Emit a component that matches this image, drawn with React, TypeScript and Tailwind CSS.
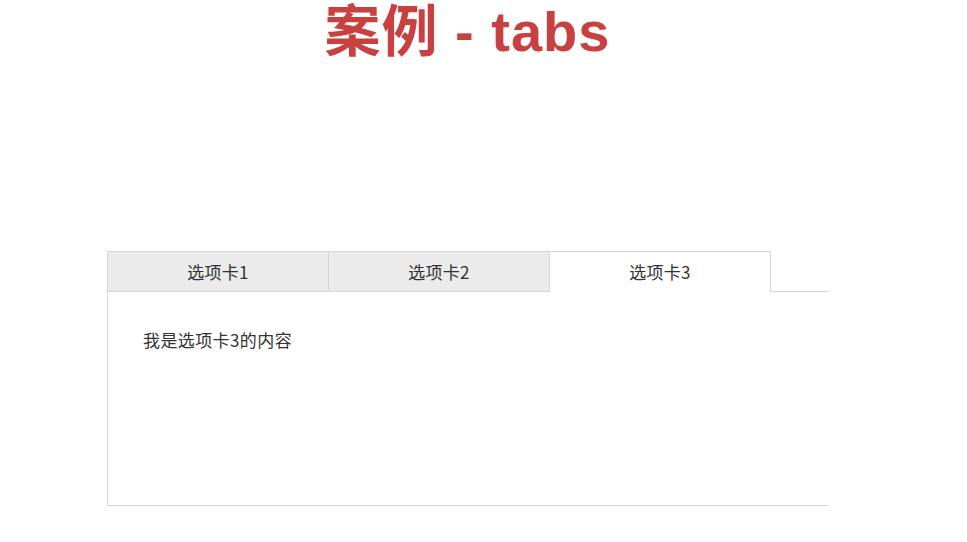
export default function App() {
  const tabs = ["选项卡1", "选项卡2", "选项卡3"];
  const active = 2;
  return (
    <div className="w-[967px] h-[542px] bg-white relative" style={{ fontFamily: '"Noto Sans CJK SC", "Open Sans", sans-serif' }}>
      <h1 className="pt-[2px] pr-[32px] text-center text-[56px] leading-[60px] font-bold text-[#c8403f] tracking-[1px]" style={{ fontFamily: '"Liberation Sans", "Noto Sans CJK SC", sans-serif' }}>
        案例 - tabs
      </h1>
      <div className="ml-[107px] mt-[189px] w-[722px]">
        <div className="flex h-[41px]">
          {tabs.map((t, i) => (
            <div
              key={t}
              className={
                i === active
                  ? "w-[222px] flex items-center justify-center border-t border-l border-r border-[#d6d6d6] bg-white text-[17px] tracking-[0.3px] text-[#333]"
                  : "w-[221px] flex items-center justify-center border-t border-l border-b border-[#d6d6d6] bg-[#ebebeb] text-[17px] tracking-[0.3px] text-[#333]"
              }
            >
              {t}
            </div>
          ))}
          <div className="flex-1 border-b border-[#d6d6d6]" />
        </div>
        <div className="h-[214px] border-l border-b border-[#d6d6d6] pl-[35px] pt-[35px] text-[17px] tracking-[0.4px] text-[#333]">
          我是选项卡3的内容
        </div>
      </div>
    </div>
  );
}
